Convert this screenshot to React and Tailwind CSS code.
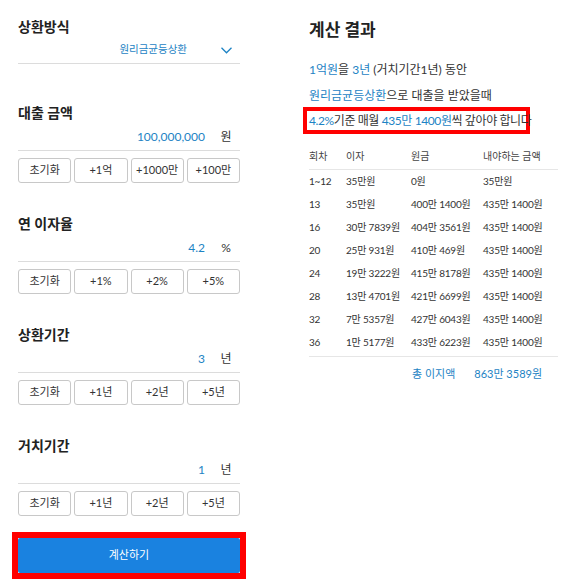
import { ChevronDown } from 'lucide-react'

const FONT = { fontFamily: 'Lato, "Noto Sans CJK KR", sans-serif' }

const sections = [
  { title: '대출 금액', value: '100,000,000', unit: '원', buttons: ['초기화', '+1억', '+1000만', '+100만'] },
  { title: '연 이자율', value: '4.2', unit: '%', buttons: ['초기화', '+1%', '+2%', '+5%'] },
  { title: '상환기간', value: '3', unit: '년', buttons: ['초기화', '+1년', '+2년', '+5년'] },
  { title: '거치기간', value: '1', unit: '년', buttons: ['초기화', '+1년', '+2년', '+5년'] },
]

const rows = [
  ['1~12', '35만원', '0원', '35만원'],
  ['13', '35만원', '400만 1400원', '435만 1400원'],
  ['16', '30만 7839원', '404만 3561원', '435만 1400원'],
  ['20', '25만 931원', '410만 469원', '435만 1400원'],
  ['24', '19만 3222원', '415만 8178원', '435만 1400원'],
  ['28', '13만 4701원', '421만 6699원', '435만 1400원'],
  ['32', '7만 5357원', '427만 6043원', '435만 1400원'],
  ['36', '1만 5177원', '433만 6223원', '435만 1400원'],
]

const InputSection = ({ title, value, unit, buttons }) => (
  <div className="mb-[31px]">
    <h3 className="h-5 leading-5 text-[14px] font-bold text-[#222]">{title}</h3>
    <div className="flex h-[28px] items-center justify-end border-b border-[#dcdcdc]">
      <span className="pr-[7px] text-[12px] text-[#1d83c4]">{value}</span>
      <span className="w-[28px] text-center text-[12px] text-[#333]">{unit}</span>
    </div>
    <div className="mt-[7px] grid grid-cols-4 gap-[3px]">
      {buttons.map((b) => (
        <button
          key={b}
          className="h-[25px] rounded-[3px] border border-[#c8c8c8] bg-white text-[11px] text-[#333]"
        >
          {b}
        </button>
      ))}
    </div>
  </div>
)

const App = () => {
  return (
    <div className="flex h-[583px] w-[580px] overflow-hidden bg-white" style={FONT}>
      {/* Left: inputs */}
      <div className="ml-[18px] w-[222px] shrink-0 pt-[17px]">
        <h3 className="h-5 leading-5 text-[14px] font-bold text-[#222]">상환방식</h3>
        <div className="flex h-[27px] items-center justify-end border-b border-[#dcdcdc]">
          <span className="mr-[25px] text-[10.5px] text-[#1d83c4]">원리금균등상환</span>
          <span className="flex w-[28px] justify-center">
            <svg width="11" height="7" viewBox="0 0 11 7" fill="none" stroke="#1d83c4" strokeWidth="1.3">
              <path d="M0.5 0.8 L5.5 5.8 L10.5 0.8" />
            </svg>
          </span>
        </div>
        <div className="h-[39px]" />

        {sections.map((s) => (
          <InputSection key={s.title} {...s} />
        ))}

        <div className="-mx-[6px] -mt-[15px] border-[6px] border-[#f00] bg-white">
          <button className="h-[35px] w-full rounded-[2px] bg-[#1a82e0] text-[11px] text-white">
            계산하기
          </button>
        </div>
      </div>

      {/* Right: result */}
      <div className="ml-[69px] w-[249px] shrink-0 pt-[20px]">
        <h2 className="h-5 leading-5 text-[17px] font-bold text-[#222]">계산 결과</h2>
        <p className="mt-[20px] h-5 whitespace-nowrap leading-5 text-[12px] text-[#333]">
          <span className="text-[#1d83c4]">1억원</span>을 <span className="text-[#1d83c4]">3년</span> (거치기간1년) 동안
        </p>
        <p className="mt-[6px] h-5 whitespace-nowrap leading-5 text-[12px] text-[#333]">
          <span className="text-[#1d83c4]">원리금균등상환</span>으로 대출을 받았을때
        </p>
        <div className="-ml-[6px] mt-[1px] w-[227px] border-4 border-[#f00] bg-white pl-[2px]">
          <p className="h-[19px] whitespace-nowrap leading-[19px] text-[12px] tracking-[-0.4px] text-[#333]">
            <span className="text-[#1d83c4]">4.2%</span>기준 매월 <span className="text-[#1d83c4]">435만 1400원</span>씩 갚아야 합니다
          </p>
        </div>

        <div className="mt-[10px] grid h-[26px] grid-cols-[37px_65px_72px_1fr] items-center border-b border-[#e6e6e6] text-[10px] text-[#444]">
          <span>회차</span>
          <span>이자</span>
          <span>원금</span>
          <span>내야하는 금액</span>
        </div>
        <div className="border-b border-[#e6e6e6] pb-[2px]">
          {rows.map((r) => (
            <div key={r[0]} className="grid h-[23px] grid-cols-[37px_65px_72px_1fr] items-center text-[10px] tracking-[-0.2px] text-[#333]">
              {r.map((c, i) => (
                <span key={i} className="whitespace-nowrap">{c}</span>
              ))}
            </div>
          ))}
        </div>
        <div className="mt-[7px] flex h-5 items-center whitespace-nowrap text-[11px] text-[#1d83c4]">
          <span className="ml-[103px]">총 이지액</span>
          <span className="ml-[19px]">863만 3589원</span>
        </div>
      </div>
    </div>
  )
}

export default App
